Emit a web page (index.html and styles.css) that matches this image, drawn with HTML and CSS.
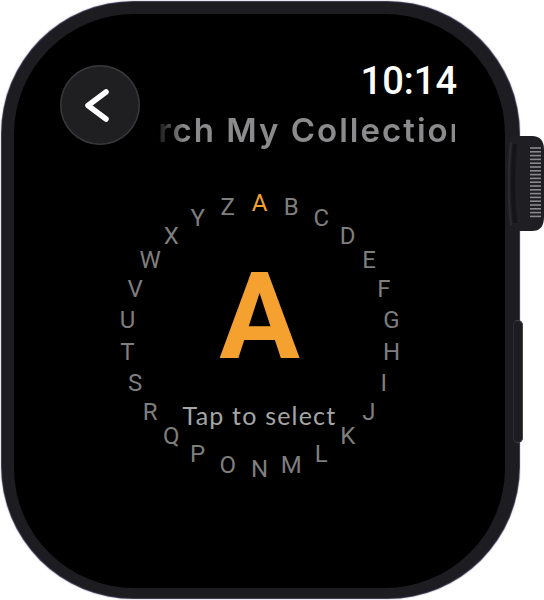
FILE: index.html
```html
<!DOCTYPE html>
<html lang="en">
<head>
<meta charset="utf-8">
<title>Search My Collection</title>
<link rel="stylesheet" href="styles.css">
</head>
<body>
<div class="device">
  <div class="case">
    <div class="screen">
      <header class="header">
        <button class="back" aria-label="Back">
          <svg width="80" height="80" viewBox="0 0 80 80"><path d="M46 27 L28 40.5 L46 54" fill="none" stroke="#fff" stroke-width="5.5" stroke-linecap="round" stroke-linejoin="round"/></svg>
        </button>
        <div class="time">10:14</div>
        <div class="title"><span class="title-text">Search My Collection</span></div>
      </header>
      <main class="dial">
        <div class="dial-center">
          <div class="big-letter">A</div>
          <div class="hint">Tap to select</div>
        </div>
        <span class="letter active" style="--a:0deg">A</span>
        <span class="letter" style="--a:13.846deg">B</span>
        <span class="letter" style="--a:27.692deg">C</span>
        <span class="letter" style="--a:41.538deg">D</span>
        <span class="letter" style="--a:55.385deg">E</span>
        <span class="letter" style="--a:69.231deg">F</span>
        <span class="letter" style="--a:83.077deg">G</span>
        <span class="letter" style="--a:96.923deg">H</span>
        <span class="letter" style="--a:110.769deg">I</span>
        <span class="letter" style="--a:124.615deg">J</span>
        <span class="letter" style="--a:138.462deg">K</span>
        <span class="letter" style="--a:152.308deg">L</span>
        <span class="letter" style="--a:166.154deg">M</span>
        <span class="letter" style="--a:180deg">N</span>
        <span class="letter" style="--a:193.846deg">O</span>
        <span class="letter" style="--a:207.692deg">P</span>
        <span class="letter" style="--a:221.538deg">Q</span>
        <span class="letter" style="--a:235.385deg">R</span>
        <span class="letter" style="--a:249.231deg">S</span>
        <span class="letter" style="--a:263.077deg">T</span>
        <span class="letter" style="--a:276.923deg">U</span>
        <span class="letter" style="--a:290.769deg">V</span>
        <span class="letter" style="--a:304.615deg">W</span>
        <span class="letter" style="--a:318.462deg">X</span>
        <span class="letter" style="--a:332.308deg">Y</span>
        <span class="letter" style="--a:346.154deg">Z</span>
      </main>
    </div>
  </div>
  <div class="crown">
    <svg width="36" height="95" viewBox="0 0 36 95">
      <path d="M2 0 H24 Q36 0 36 14 V81 Q36 95 24 95 H2 Z" fill="#1f1e23"/>
      <path d="M3 6 Q-2 47.5 3 89" fill="none" stroke="#2c2b30" stroke-width="2"/>
      <path d="M5 8 Q1 47.5 5 87 H9 Q5 47.5 9 8 Z" fill="#151418"/>
      <g stroke="#8a8a8a" stroke-width="1.6">
        <line x1="22" y1="12" x2="33" y2="12"/>
        <line x1="22" y1="15.8" x2="33" y2="15.8"/>
        <line x1="22" y1="19.6" x2="33" y2="19.6"/>
        <line x1="22" y1="23.4" x2="33" y2="23.4"/>
        <line x1="22" y1="27.2" x2="33" y2="27.2"/>
        <line x1="22" y1="31" x2="33" y2="31"/>
        <line x1="22" y1="34.8" x2="33" y2="34.8"/>
        <line x1="22" y1="38.6" x2="33" y2="38.6"/>
        <line x1="22" y1="42.4" x2="33" y2="42.4"/>
        <line x1="22" y1="46.2" x2="33" y2="46.2"/>
        <line x1="22" y1="50" x2="33" y2="50"/>
        <line x1="22" y1="53.8" x2="33" y2="53.8"/>
        <line x1="22" y1="57.6" x2="33" y2="57.6"/>
        <line x1="22" y1="61.4" x2="33" y2="61.4"/>
        <line x1="22" y1="65.2" x2="33" y2="65.2"/>
        <line x1="22" y1="69" x2="33" y2="69"/>
        <line x1="22" y1="72.8" x2="33" y2="72.8"/>
        <line x1="22" y1="76.6" x2="33" y2="76.6"/>
        <line x1="22" y1="80.4" x2="33" y2="80.4"/>
      </g>
    </svg>
  </div>
  <div class="side-button"></div>
</div>
</body>
</html>
```
FILE: styles.css
```css
html, body {
  margin: 0;
  padding: 0;
  background: #ffffff;
}

.device {
  position: relative;
  width: 544px;
  height: 600px;
  padding: 2px 0 0 2px;
  box-sizing: border-box;
}

.case {
  width: 517px;
  height: 596px;
  box-sizing: border-box;
  padding: 12px 14px 10px 12px;
  background: #1d1c21;
  border-radius: 132px;
  box-shadow: 0 0 1px 0.5px #2d2844;
}

.screen {
  width: 100%;
  height: 100%;
  background: #000;
  border-radius: 120px;
  overflow: hidden;
  font-family: Roboto, "Liberation Sans", sans-serif;
}

.header {
  display: grid;
  grid-template-columns: 80px 1fr;
  grid-template-rows: 40px auto;
  padding: 51px 50px 0 46px;
}

.back {
  grid-column: 1;
  grid-row: 1 / 3;
  align-self: start;
  width: 80px;
  height: 80px;
  padding: 0;
  border: none;
  border-radius: 50%;
  background: #1f1f21;
  box-shadow: inset 0 0 0 1.5px #38383b;
  display: block;
}

.back svg {
  display: block;
}

.time {
  grid-column: 2;
  grid-row: 1;
  justify-self: end;
  margin-top: -4px;
  margin-right: -2px;
  font-size: 38px;
  line-height: 40px;
  font-weight: 500;
  color: #ffffff;
}

.title {
  grid-column: 2;
  grid-row: 2;
  margin-top: 3px;
  overflow: hidden;
  white-space: nowrap;
  font-family: Inter, Roboto, sans-serif;
  font-weight: 600;
  font-size: 33px;
  line-height: 44px;
  letter-spacing: 2px;
  color: #8b8b8d;
  -webkit-mask-image: linear-gradient(to right, transparent 13px, #000 44px);
  mask-image: linear-gradient(to right, transparent 13px, #000 44px);
}

.title-text {
  display: inline-block;
  margin-left: -48px;
}

.dial {
  position: relative;
  width: 300px;
  height: 300px;
  margin: 34px auto 0;
}

.dial-center {
  display: flex;
  flex-direction: column;
  align-items: center;
  padding-top: 71px;
}

.big-letter {
  font-family: Roboto, sans-serif;
  font-weight: 700;
  font-size: 120px;
  line-height: 120px;
  color: #f4a12f;
}

.hint {
  margin-top: 26px;
  font-family: Lato, "Open Sans", sans-serif;
  font-size: 25px;
  line-height: 24px;
  letter-spacing: 1.2px;
  color: #a6a6a6;
}

.letter {
  position: absolute;
  left: 50%;
  top: 50%;
  width: 30px;
  height: 30px;
  margin: -15px 0 0 -15px;
  text-align: center;
  font-size: 24px;
  line-height: 30px;
  color: #7e7e7e;
  transform: rotate(var(--a)) translateY(-133px) rotate(calc(-1 * var(--a)));
}

.letter.active {
  color: #f4a12f;
}

.crown {
  position: absolute;
  left: 508px;
  top: 136px;
  width: 36px;
  height: 95px;
}

.crown svg {
  display: block;
}

.side-button {
  position: absolute;
  left: 513px;
  top: 320px;
  width: 10px;
  height: 123px;
  box-sizing: border-box;
  border: 1px solid #434246;
  border-left-color: #2e2d31;
  border-radius: 5px;
  background: #1d1c21;
}
```
